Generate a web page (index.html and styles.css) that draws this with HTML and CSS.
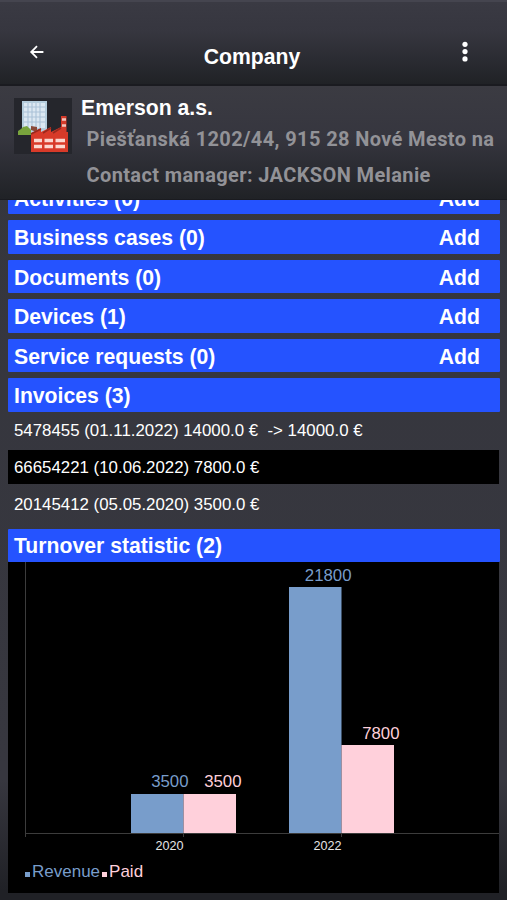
FILE: index.html
```html
<!DOCTYPE html>
<html lang="en">
<head>
    <meta charset="UTF-8">
    <meta name="viewport" content="width=device-width, initial-scale=1.0">
    <title>Company</title>
    <link rel="stylesheet" href="styles.css">
</head>
<body>

    <header class="toolbar">
        <svg class="back-icon" width="16" height="16" viewBox="0 0 16 16">
            <path d="M14.4 8H2.4M8 2.2L2.2 8L8 13.8" />
        </svg>
        <h1>Company</h1>
        <svg class="menu-icon" width="6" height="22" viewBox="0 0 6 22">
            <circle cx="3" cy="3.3" r="2.6" />
            <circle cx="3" cy="10.6" r="2.6" />
            <circle cx="3" cy="17.9" r="2.6" />
        </svg>
    </header>

    <section class="company">
        <svg class="company-icon" width="60" height="60" viewBox="0 0 60 60">
            <rect y="2" width="58" height="56" fill="#25262c" />
            <rect x="8" y="5" width="25" height="33" fill="#b5cddd" />
            <rect x="10" y="7" width="21" height="25" fill="#dce8f2" />
            <path d="M10 11H31M10 16H31M10 21H31M10 26H31M14 7V32M18 7V32M22 7V32M26 7V32" stroke="#abc2d8" stroke-width="1.1" />
            <path d="M4 39V35L7 33L9 31L13 30L17 34V39Z" fill="#79a43d" />
            <path d="M17 34V30L23 31V36Z" fill="#8a4939" />
            <path d="M47 36V20H52.500V36Z" fill="#d43a2a" />
            <path d="M48 23.500H52M48 29.500H52" stroke="#f2c5bd" stroke-width="2.500" />
            <path d="M17 56V37L27 32V36L37 31V36L47 31V36H54V56Z" fill="#d83a29" />
            <path d="M17 38L27 33M29 37L37 32M39 37L47 32" stroke="#98291e" stroke-width="1.500" />
            <path d="M20 44.500H28M30.500 44.500H39M41.500 44.500H51M20 50.500H28M30.500 50.500H39M41.500 50.500H51" stroke="#fbd8d0" stroke-width="3.500" />
        </svg>
        <div class="company-info">
            <h2>Emerson a.s.</h2>
            <p class="address">Piešťanská 1202/44, 915 28 Nové Mesto na</p>
            <p class="manager">Contact manager: JACKSON Melanie</p>
        </div>
    </section>

    <main class="content">
        <div class="sections">
            <div class="section-bar"><span>Activities (0)</span><span class="add">Add</span></div>
            <div class="section-bar"><span>Business cases (0)</span><span class="add">Add</span></div>
            <div class="section-bar"><span>Documents (0)</span><span class="add">Add</span></div>
            <div class="section-bar"><span>Devices (1)</span><span class="add">Add</span></div>
            <div class="section-bar"><span>Service requests (0)</span><span class="add">Add</span></div>
            <div class="section-bar"><span>Invoices (3)</span></div>
        </div>

        <ul class="invoices">
            <li>5478455 (01.11.2022) 14000.0 €  -&gt; 14000.0 €</li>
            <li class="alt">66654221 (10.06.2022) 7800.0 €</li>
            <li>20145412 (05.05.2020) 3500.0 €</li>
        </ul>

        <div class="section-bar"><span>Turnover statistic (2)</span></div>

        <div class="statistic">
            <svg class="chart" width="491" height="294" viewBox="0 0 491 294">
                <path class="axis" d="M17.500 0V275M17 271.500H491M175.500 271V275M333.500 271V275" />
                <rect class="revenue" x="123" y="232" width="52.500" height="39" />
                <rect class="paid" x="175.500" y="232" width="52.500" height="39" />
                <rect class="revenue" x="281" y="25" width="52.500" height="246" />
                <rect class="paid" x="333.500" y="183" width="52.500" height="88" />
                <text class="revenue value" x="180.500" y="225">3500</text>
                <text class="paid value" x="233.500" y="225">3500</text>
                <text class="revenue value" x="343.500" y="19">21800</text>
                <text class="paid value" x="391.500" y="177">7800</text>
                <text class="year" x="175.500" y="288">2020</text>
                <text class="year" x="333.500" y="288">2022</text>
            </svg>
            <div class="legend">
                <span class="legend-revenue">Revenue</span>
                <span class="legend-paid">Paid</span>
            </div>
        </div>
    </main>

</body>
</html>
```
FILE: styles.css
```css
* {
    margin: 0;
    padding: 0;
    box-sizing: border-box;
}

body {
    width: 507px;
    height: 900px;
    overflow: hidden;
    display: flex;
    flex-direction: column;
    font-family: "Liberation Sans", Arial, sans-serif;
    color: #fff;
    background: linear-gradient(#35363d 0, #37373f 780px, #202126 890px, #202126 100%);
}

/* Top bar */
.toolbar {
    height: 86px;
    flex: none;
    display: grid;
    grid-template-columns: 80px 1fr 80px;
    align-items: center;
    padding-top: 20px;
    border-top: 2px solid #45454f;
    border-bottom: 2px solid #1a1b20;
    background: linear-gradient(#3a3a43 0, #36363f 30px, #202226 100%);
}

.back-icon {
    margin-left: 29px;
    margin-bottom: 2px;
    fill: none;
    stroke: #fff;
    stroke-width: 1.8;
}

.toolbar h1 {
    font-size: 21.2px;
    line-height: 24px;
    text-align: center;
    margin-top: 8px;
    margin-right: 3px;
}

.menu-icon {
    margin-left: 35px;
    margin-bottom: 2px;
    fill: #fff;
}

/* Company header */
.company {
    height: 114px;
    flex: none;
    display: flex;
    gap: 7px;
    padding: 10px 0 0 14px;
    border-bottom: 1px solid #1a1b20;
    background: linear-gradient(#3b3b42 0, #36363f 45%, #202226 100%);
}

.company-icon {
    flex: none;
}

.company-info {
    white-space: nowrap;
}

.company-info h2 {
    font-size: 21.2px;
    line-height: 24px;
}

.company-info p {
    font-family: Roboto, sans-serif;
    font-weight: bold;
    font-size: 20px;
    line-height: 24px;
    letter-spacing: 0.38px;
    color: #929297;
    padding-left: 5.5px;
}

.address {
    margin-top: 7px;
}

.manager {
    margin-top: 12px;
}

/* Sections */
.content {
    flex: 1;
    min-height: 0;
    overflow: hidden;
    padding: 0 7px 0 8px;
}

/* The list is scrolled under the company header */
.sections {
    margin-top: -19px;
    display: flex;
    flex-direction: column;
    gap: 6.2px;
}

.section-bar {
    height: 33.3px;
    display: flex;
    align-items: center;
    justify-content: space-between;
    padding: 2px 20px 0 6px;
    font-size: 21.2px;
    font-weight: bold;
    border-radius: 1px;
    background-color: #2553ff;
}

.invoices {
    list-style: none;
    height: 117px;
    font-size: 16.85px;
}

.invoices li {
    height: 37px;
    line-height: 37px;
    padding-left: 6px;
    white-space: pre;
}

.invoices .alt {
    width: 491px;
    height: 34px;
    line-height: 35px;
    margin: 1px 0 2px;
    background-color: #000;
}

/* Turnover chart */
.statistic {
    width: 491px;
    height: 331px;
    background-color: #000;
}

.chart {
    display: block;
}

.axis {
    fill: none;
    stroke: #3c3c3c;
}

.revenue {
    fill: #789dcb;
}

.paid {
    fill: #ffd0db;
}

.value {
    font-size: 16.8px;
    text-anchor: end;
}

.year {
    font-size: 12.6px;
    fill: #e6e6e6;
    text-anchor: end;
}

.legend {
    display: flex;
    gap: 2px;
    padding: 6px 0 0 17px;
    font-size: 17px;
    line-height: 20px;
}

.legend span::before {
    content: "";
    display: inline-block;
    width: 5px;
    height: 5px;
    margin-right: 2px;
    background-color: currentColor;
}

.legend-revenue {
    color: #789dcb;
}

.legend-paid {
    color: #ffd0db;
}
```
